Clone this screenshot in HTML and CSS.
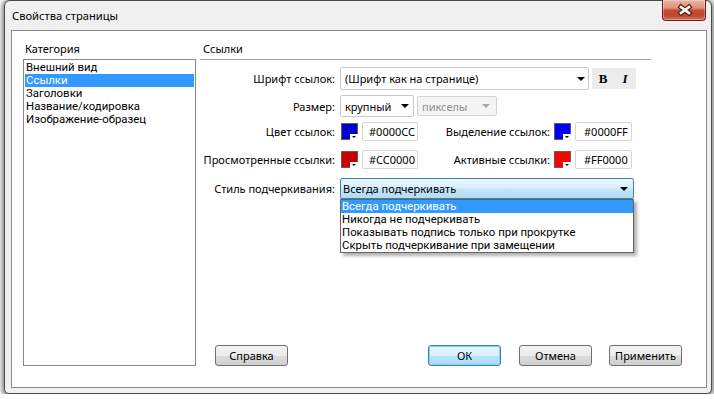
FILE: index.html
```html
<!DOCTYPE html>
<html lang="ru">

<head>
    <meta charset="UTF-8">
    <meta name="viewport" content="width=device-width, initial-scale=1.0">
    <title>Свойства страницы</title>
    <link rel="stylesheet" href="styles.css">
</head>

<body>
    <div class="window">
        <div class="titlebar">
            <span class="title">Свойства страницы</span>
            <div class="close-btn">
                <svg width="43" height="20" viewBox="0 0 43 20">
                    <path d="M18 7 L26 13 M26 7 L18 13" stroke="#5b2419" stroke-width="5" stroke-linecap="square" fill="none" />
                    <path d="M18 7 L26 13 M26 7 L18 13" stroke="#ffffff" stroke-width="2.6" stroke-linecap="square" fill="none" />
                </svg>
            </div>
        </div>

        <div class="client">
            <div class="category">
                <div class="section-label">Категория</div>
                <ul class="listbox">
                    <li>Внешний вид</li>
                    <li class="selected">Ссылки</li>
                    <li>Заголовки</li>
                    <li>Название/кодировка</li>
                    <li>Изображение-образец</li>
                </ul>
            </div>

            <div class="panel">
                <div class="panel-header">Ссылки</div>

                <div class="form">
                    <div class="row row-font">
                        <span class="field-label">Шрифт ссылок:</span>
                        <div class="select select-font">
                            <span>(Шрифт как на странице)</span>
                            <span class="arrow"></span>
                        </div>
                        <div class="style-btns">
                            <span class="bold">B</span>
                            <span class="italic">I</span>
                        </div>
                    </div>

                    <div class="row row-size">
                        <span class="field-label">Размер:</span>
                        <div class="select select-size">
                            <span>крупный</span>
                            <span class="arrow"></span>
                        </div>
                        <div class="select select-unit disabled">
                            <span>пикселы</span>
                            <span class="arrow"></span>
                        </div>
                    </div>

                    <div class="row row-color">
                        <span class="field-label">Цвет ссылок:</span>
                        <span class="swatch swatch-link"></span>
                        <span class="hex-input">#0000CC</span>
                        <span class="field-label field-label-right">Выделение ссылок:</span>
                        <span class="swatch swatch-hover"></span>
                        <span class="hex-input hex-input-right">#0000FF</span>
                    </div>

                    <div class="row row-color row-visited">
                        <span class="field-label">Просмотренные ссылки:</span>
                        <span class="swatch swatch-visited"></span>
                        <span class="hex-input">#CC0000</span>
                        <span class="field-label field-label-right">Активные ссылки:</span>
                        <span class="swatch swatch-active"></span>
                        <span class="hex-input hex-input-right">#FF0000</span>
                    </div>

                    <div class="row row-underline">
                        <span class="field-label">Стиль подчеркивания:</span>
                        <div class="combo-wrap">
                            <div class="select combo-open">
                                <span>Всегда подчеркивать</span>
                                <span class="arrow"></span>
                            </div>
                            <ul class="dropdown">
                                <li class="selected">Всегда подчеркивать</li>
                                <li>Никогда не подчеркивать</li>
                                <li>Показывать подпись только при прокрутке</li>
                                <li>Скрыть подчеркивание при замещении</li>
                            </ul>
                        </div>
                    </div>
                </div>

                <div class="buttons">
                    <button class="btn">Справка</button>
                    <button class="btn btn-ok">ОК</button>
                    <button class="btn btn-cancel">Отмена</button>
                    <button class="btn btn-apply">Применить</button>
                </div>
            </div>
        </div>
    </div>
</body>

</html>
```

FILE: styles.css
```css
body,
html {
    margin: 0;
    padding: 0;
    background-color: white;
    font-family: 'Noto Sans', 'Open Sans', sans-serif;
    font-size: 11px;
    color: #000;
}

.window {
    box-sizing: border-box;
    width: 708px;
    height: 394px;
    margin-left: 4px;
    border: 1px solid #4a4a4a;
    border-radius: 6px 6px 5px 5px;
    background-color: #f0f0f0;
    box-shadow: 0 1px 5px 2px rgba(0, 0, 0, 0.5);
    display: flex;
    flex-direction: column;
}

/* title bar */
.titlebar {
    height: 29px;
    display: flex;
    align-items: flex-start;
    padding-left: 7px;
}

.title {
    font-size: 11.2px;
    line-height: 30px;
}

.close-btn {
    box-sizing: border-box;
    margin-left: auto;
    margin-right: 5px;
    margin-top: -1px;
    width: 44px;
    height: 21px;
    border: 1px solid #6b2216;
    border-top: none;
    border-radius: 0 0 4px 4px;
    background: linear-gradient(#eab2a4 0%, #de907c 40%, #c44a33 52%, #c1442d 75%, #d27560 100%);
    box-shadow: inset 0 0 0 1px rgba(255, 255, 255, 0.3);
}

.close-btn svg {
    display: block;
}

/* client area */
.client {
    box-sizing: border-box;
    height: 358px;
    margin: 0 4px 5px 6px;
    border: 1px solid #898989;
    background-color: white;
    display: grid;
    grid-template-columns: 173px 1fr;
    column-gap: 4px;
    padding: 10px 15px 21px 11px;
}

.category {
    display: flex;
    flex-direction: column;
}

.section-label {
    line-height: 16px;
    padding-left: 2px;
    margin-bottom: 2px;
}

.listbox {
    flex: 1;
    margin: 0;
    padding: 1px;
    list-style: none;
    border: 1px solid #828790;
}

/* Roboto keeps the glyph box inside the 13px rows */
.listbox li,
.dropdown li {
    font-family: Roboto, 'Noto Sans', sans-serif;
    font-size: 11.4px;
    line-height: 13px;
    height: 13px;
    padding-left: 1px;
    white-space: nowrap;
}

.listbox li.selected,
.dropdown li.selected {
    background-color: #3399ff;
    color: white;
}

.panel {
    display: flex;
    flex-direction: column;
}

.panel-header {
    width: 448px;
    padding-left: 3px;
    line-height: 16px;
    padding-bottom: 2px;
    border-bottom: 1px solid #a0a0a0;
}

/* form rows */
.row {
    display: flex;
    align-items: center;
}

.row-font {
    margin-top: 7px;
    height: 23px;
}

.row-size {
    margin-top: 5px;
    height: 22px;
}

.row-color {
    margin-top: 5px;
    height: 19px;
}

.row-visited {
    margin-top: 9px;
}

.row-underline {
    margin-top: 9px;
    height: 21px;
}

.field-label {
    flex: none;
    width: 135px;
    margin-right: 5px;
    text-align: right;
    white-space: nowrap;
}

.field-label-right {
    width: 132px;
    margin-left: 0;
    margin-right: 4px;
}

.select {
    box-sizing: border-box;
    height: 100%;
    border: 1px solid #c9c9c9;
    border-radius: 2px;
    background-color: white;
    display: flex;
    align-items: center;
    justify-content: space-between;
    padding: 0 4px 0 4px;
    white-space: nowrap;
}

.arrow {
    width: 0;
    height: 0;
    border-left: 4px solid transparent;
    border-right: 4px solid transparent;
    border-top: 4px solid #000;
}

.select-font {
    width: 249px;
    padding-right: 3px;
}

.style-btns {
    display: flex;
    margin-left: 3px;
    height: 21px;
    background-color: #ececec;
    font-family: 'Liberation Serif', serif;
    font-weight: bold;
    font-size: 13px;
}

.style-btns span {
    width: 22px;
    line-height: 21px;
    text-align: center;
}

.style-btns .italic {
    font-style: italic;
}

.select-size {
    width: 74px;
    padding-right: 4px;
}

.select-unit {
    width: 80px;
    margin-left: 3px;
    height: 20px;
}

.select.disabled {
    background-color: #f4f4f4;
    border-color: #d3d3d3;
    color: #8d8d8d;
    padding-right: 6px;
}

.select.disabled .arrow {
    border-top-color: #a7a7a7;
}

/* colour pickers */
.swatch {
    position: relative;
    box-sizing: border-box;
    flex: none;
    width: 17px;
    height: 17px;
    margin-left: 1px;
    border: 1px solid #5f5f5f;
}

.swatch::after {
    content: '';
    position: absolute;
    right: -1px;
    bottom: -1px;
    width: 8px;
    height: 6px;
    background-color: white;
}

.swatch::before {
    content: '';
    position: absolute;
    right: 1px;
    bottom: 1px;
    z-index: 1;
    width: 0;
    height: 0;
    border-left: 2px solid transparent;
    border-right: 2px solid transparent;
    border-top: 2px solid #000;
}

.swatch-link {
    background-color: #0000cc;
}

.swatch-hover {
    background-color: #0000ff;
}

.swatch-visited {
    background-color: #cc0000;
}

.swatch-active {
    background-color: #ff0000;
}

.hex-input {
    box-sizing: border-box;
    flex: none;
    width: 56px;
    height: 19px;
    margin-left: 4px;
    border: 1px solid #d6d6d6;
    border-radius: 2px;
    line-height: 17px;
    padding-left: 6px;
}

.hex-input-right {
    width: 57px;
    margin-left: 4px;
    padding-left: 8px;
}

.field-label-right + .swatch {
    margin-left: 0;
}

/* open combo */
.combo-wrap {
    position: relative;
    width: 294px;
    height: 100%;
}

.combo-open {
    padding-left: 2px;
    padding-right: 5px;
    border-color: #3c7fb1;
    background: linear-gradient(#eaf6fd 0%, #d9f0fc 45%, #c4e5f8 55%, #b2dcf4 100%);
}

.dropdown {
    position: absolute;
    top: 100%;
    left: 0;
    box-sizing: border-box;
    width: 294px;
    margin: 0;
    padding: 0;
    list-style: none;
    background-color: white;
    border: 1px solid #646464;
    box-shadow: 3px 3px 3px rgba(0, 0, 0, 0.3);
    z-index: 2;
}

/* dialog buttons */
.buttons {
    margin-top: auto;
    display: flex;
    padding-left: 15px;
}

.btn {
    box-sizing: border-box;
    width: 73px;
    height: 21px;
    padding: 0;
    border: 1px solid #707070;
    border-radius: 3px;
    background: linear-gradient(#f2f2f2 0%, #ebebeb 50%, #dddddd 51%, #cfcfcf 100%);
    font-family: 'Noto Sans', 'Open Sans', sans-serif;
    font-size: 11px;
    color: #000;
    line-height: 19px;
}

.btn-ok {
    margin-left: 140px;
    border-color: #3c7fb1;
    background: linear-gradient(#eaf6fd 0%, #d9f0fc 50%, #bee6fd 51%, #a7d9f5 100%);
    box-shadow: inset 0 0 0 1px #8ed0f4;
}

.btn-cancel {
    margin-left: 18px;
}

.btn-apply {
    margin-left: 17px;
}
```
